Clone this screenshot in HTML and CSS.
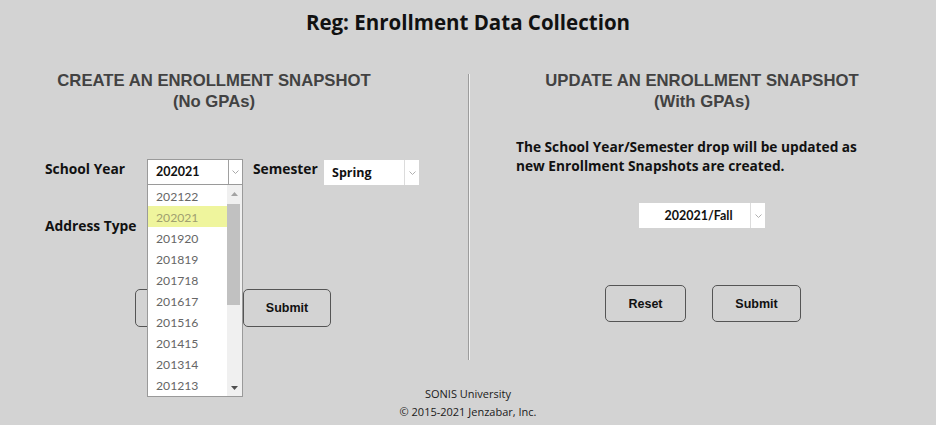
FILE: index.html
```html
<!DOCTYPE html>
<html lang="en">
<head>
<meta charset="utf-8">
<title>Reg: Enrollment Data Collection</title>
<link rel="stylesheet" href="styles.css">
</head>
<body>
<h1 class="title">Reg: Enrollment Data Collection</h1>
<main class="panels">
  <section class="panel panel-left">
    <h2 class="panel-heading">CREATE AN ENROLLMENT SNAPSHOT<br>(No GPAs)</h2>
    <div class="form-row row-year">
      <span class="label label-year">School Year</span>
      <div class="select select-open">
        <span class="select-value select-digits">202021</span>
        <span class="select-arrow"><svg width="7" height="4" viewBox="0 0 7 4"><polyline points="0.5,0.5 3.5,3.5 6.5,0.5" fill="none" stroke="#a8a8a8" stroke-width="1"/></svg></span>
        <div class="dropdown">
          <ul class="dropdown-list">
            <li class="option">202122</li>
            <li class="option option-active">202021</li>
            <li class="option">201920</li>
            <li class="option">201819</li>
            <li class="option">201718</li>
            <li class="option">201617</li>
            <li class="option">201516</li>
            <li class="option">201415</li>
            <li class="option">201314</li>
            <li class="option">201213</li>
          </ul>
          <div class="scrollbar">
            <span class="scroll-btn"><svg width="7" height="4" viewBox="0 0 7 4"><polygon points="0,4 3.5,0 7,4" fill="#a3a3a3"/></svg></span>
            <span class="scroll-track"><span class="scroll-thumb"></span></span>
            <span class="scroll-btn"><svg width="7" height="4" viewBox="0 0 7 4"><polygon points="0,0 3.5,4 7,0" fill="#505050"/></svg></span>
          </div>
        </div>
      </div>
      <span class="label label-sem">Semester</span>
      <div class="select select-plain select-sem">
        <span class="select-value">Spring</span>
        <span class="select-arrow"><svg width="7" height="4" viewBox="0 0 7 4"><polyline points="0.5,0.5 3.5,3.5 6.5,0.5" fill="none" stroke="#b0b0b0" stroke-width="1"/></svg></span>
      </div>
    </div>
    <div class="form-row row-addr">
      <span class="label">Address Type</span>
    </div>
    <div class="btn-row btn-row-left">
      <button class="btn btn-reset" type="button">Reset</button>
      <button class="btn btn-submit" type="button">Submit</button>
    </div>
  </section>
  <div class="divider"></div>
  <section class="panel panel-right">
    <h2 class="panel-heading">UPDATE AN ENROLLMENT SNAPSHOT<br>(With GPAs)</h2>
    <p class="note">The School Year/Semester drop will be updated as<br>new Enrollment Snapshots are created.</p>
    <div class="select select-plain select-snap">
      <span class="select-value select-digits">202021/Fall</span>
      <span class="select-arrow"><svg width="7" height="4" viewBox="0 0 7 4"><polyline points="0.5,0.5 3.5,3.5 6.5,0.5" fill="none" stroke="#b0b0b0" stroke-width="1"/></svg></span>
    </div>
    <div class="btn-row btn-row-right">
      <button class="btn btn-reset" type="button">Reset</button>
      <button class="btn btn-submit" type="button">Submit</button>
    </div>
  </section>
</main>
<footer class="footer">
  <div>SONIS University</div>
  <div>&copy; 2015-2021 Jenzabar, Inc.</div>
</footer>
</body>
</html>
```
FILE: styles.css
```css
* { box-sizing: border-box; }

html, body {
  margin: 0;
  padding: 0;
}

body {
  width: 936px;
  height: 425px;
  overflow: hidden;
  background: #d3d3d3;
  color: #111;
  font-family: "Open Sans", "Noto Sans", sans-serif;
}

.title {
  margin: 8px 0 0;
  height: 28px;
  line-height: 28px;
  font-size: 20.5px;
  font-weight: 700;
  text-align: center;
  color: #111;
}

.panels {
  display: grid;
  grid-template-columns: 468px 2px 1fr;
  margin-top: 34px;
}

.panel-heading {
  margin: 0;
  font-family: "Liberation Sans", Arial, sans-serif;
  font-size: 16.7px;
  line-height: 21px;
  font-weight: 700;
  color: #424242;
  text-align: center;
}

.panel-left .panel-heading {
  width: 428px;
}

.form-row {
  display: flex;
  align-items: flex-start;
  padding-left: 45px;
}

.row-year { margin-top: 47px; }
.row-addr { margin-top: 31px; }

.label {
  font-size: 13.8px;
  line-height: 20px;
  font-weight: 700;
  color: #111;
}

.label-year { width: 102px; }
.label-sem { width: 71px; margin-left: 10px; }

.select {
  position: relative;
  display: flex;
  background: #fff;
  font-size: 12.5px;
  font-weight: 700;
  color: #111;
}

.select-value {
  flex: 1;
  padding-left: 8px;
  white-space: nowrap;
}

.select-digits {
  font-family: Lato, "Open Sans", sans-serif;
  font-size: 12.5px;
}

.select-arrow {
  width: 15px;
  display: flex;
  align-items: center;
  justify-content: center;
  border-left: 1px solid #dcdcdc;
}

.select-open {
  width: 96px;
  height: 26px;
  line-height: 24px;
  border: 1px solid #9a9a9a;
}

.select-open .select-arrow {
  width: 14px;
  border-left-color: #a0a0a0;
}

.select-plain {
  height: 25px;
  line-height: 25px;
}

.select-sem {
  width: 95px;
  margin-top: 1px;
}

.select-snap {
  width: 126px;
  margin: 28px auto 0;
  transform: translateX(-1px);
}

.select-snap .select-value {
  text-align: center;
  padding-left: 8px;
  font-size: 12.5px;
}

.dropdown {
  position: absolute;
  top: 25px;
  left: -1px;
  width: 96px;
  height: 212px;
  display: flex;
  background: #fff;
  border: 1px solid #9a9a9a;
  border-top: 0;
  z-index: 5;
}

.dropdown-list {
  flex: 1;
  margin: 0;
  padding: 0;
  list-style: none;
}

.option {
  height: 21px;
  line-height: 21px;
  padding: 1px 0 0 8px;
  font-family: Lato, "Open Sans", sans-serif;
  font-size: 12.2px;
  font-weight: 400;
  color: #666;
}

.option-active {
  background: #eff59d;
  color: #a0a070;
}

.scrollbar {
  width: 15px;
  display: flex;
  flex-direction: column;
  background: #f0f0f0;
}

.scroll-btn {
  height: 17px;
  display: flex;
  align-items: center;
  justify-content: center;
}

.scroll-track {
  flex: 1;
  padding: 2px 2px 0 0;
}

.scroll-thumb {
  display: block;
  height: 101px;
  background: #c1c1c1;
}

.btn-row {
  display: flex;
  gap: 27px;
}

.btn-row-left {
  margin-top: 53px;
  padding-left: 135px;
}

.btn-row-left .btn { height: 38px; }

.btn-row-right {
  justify-content: center;
  gap: 26px;
  margin-top: 57px;
}

.btn-row-right .btn { height: 37px; }

.btn {
  padding: 0;
  background: transparent;
  border: 1px solid #555;
  border-radius: 5px;
  font-family: "Liberation Sans", Arial, sans-serif;
  font-size: 12.5px;
  font-weight: 700;
  color: #111;
}

.btn-reset { width: 81px; }
.btn-submit { width: 89px; }
.btn-row-left .btn-submit { width: 88px; }

.divider {
  margin-top: 4px;
  height: 286px;
  border-left: 1px solid #9c9c9c;
  border-right: 1px solid #f2f2f2;
}

.panel-right .panel-heading {
  padding-right: 2px;
}

.note {
  margin: 25px 0 0;
  padding-left: 46px;
  font-size: 13.7px;
  line-height: 19px;
  font-weight: 700;
  color: #111;
}

.footer {
  margin-top: 25px;
  text-align: center;
  font-size: 11px;
  line-height: 18px;
  color: #1a1a1a;
}
```
